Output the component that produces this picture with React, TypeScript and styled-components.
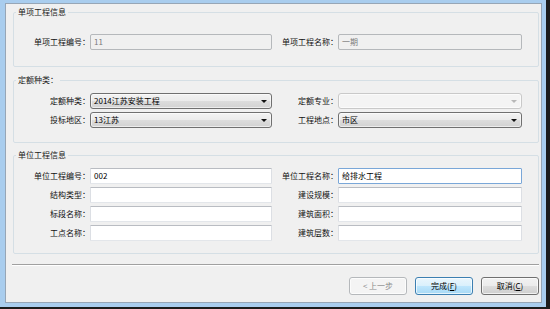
import React, { FC } from "react";
import styled, { createGlobalStyle } from "styled-components";

const GlobalStyle = createGlobalStyle`
  html, body {
    margin: 0;
    padding: 0;
    background: #1c1c1c;
  }
  body {
    font-family: "Noto Sans CJK SC", "Microsoft YaHei", sans-serif;
    font-size: 8px;
    color: #000;
  }
  * {
    box-sizing: border-box;
  }
`;

const Screen = styled.div`
  width: 550px;
  height: 309px;
  overflow: hidden;
  background: #1c1c1c;
  padding: 0 4px 2px 0;
`;

const Frame = styled.div`
  height: 100%;
  background: #a9cdee;
  padding: 3px 4px 4px 5px;
  display: flex;
  flex-direction: column;
`;

const Client = styled.div`
  flex: 1;
  background: #f0f0f0;
  border: 1px solid #97a6b6;
  padding: 3px 2px 0 7px;
  display: flex;
  flex-direction: column;
`;

const Group = styled.fieldset<{ $top: number; $pt: number; $pb: number }>`
  margin: ${(p) => p.$top}px 0 0 0;
  min-width: 0;
  border: 1px solid #d5dfe5;
  border-radius: 2px;
  padding: ${(p) => p.$pt}px 15px ${(p) => p.$pb}px 0;
`;

const Legend = styled.legend`
  margin-left: 2px;
  padding: 0 2px;
  font-size: 8px;
  line-height: 10px;
  color: #1a1a1a;
`;

const FormGrid = styled.div`
  display: grid;
  grid-template-columns: 76px 182px 66px 184px;
  grid-auto-rows: 16px;
  row-gap: 3px;
`;

const Label = styled.div`
  font-size: 8px;
  line-height: 16px;
  text-align: right;
  white-space: nowrap;
  color: #111;
`;

const TextBox = styled.div<{ $disabled?: boolean; $focused?: boolean }>`
  height: 16px;
  border: 1px solid;
  border-color: ${(p) =>
    p.$focused
      ? "#7aa7d8"
      : p.$disabled
      ? "#b5b8bb"
      : "#b9bcc2 #dcdfe4 #e3e6ea #dcdfe4"};
  border-radius: ${(p) => (p.$disabled ? "2px" : "1px")};
  background: ${(p) => (p.$disabled ? "#f0f0f0" : "#fff")};
  color: ${(p) => (p.$disabled ? "#7a7a7a" : "#000")};
  padding-left: 3px;
  font-size: 8px;
  line-height: 14px;
  white-space: nowrap;
  overflow: hidden;
`;

const Combo = styled.div<{ $disabled?: boolean }>`
  height: 16px;
  border: 1px solid ${(p) => (p.$disabled ? "#c9c9c9" : "#707070")};
  border-radius: 3px;
  background: ${(p) =>
    p.$disabled
      ? "#f4f4f4"
      : "linear-gradient(#f3f3f3 0%, #ebebeb 50%, #dddddd 50%, #d2d2d2 100%)"};
  box-shadow: inset 0 0 0 1px rgba(255, 255, 255, 0.6);
  padding: 0 4px 0 3px;
  display: flex;
  align-items: center;
  justify-content: space-between;
  font-size: 8px;
  line-height: 14px;
  color: #000;
  white-space: nowrap;
`;

const Arrow = styled.span<{ $disabled?: boolean }>`
  width: 0;
  height: 0;
  border-left: 3px solid transparent;
  border-right: 3px solid transparent;
  border-top: 3px solid ${(p) => (p.$disabled ? "#b8b8b8" : "#111")};
`;

const Separator = styled.div`
  margin: 10px 0 0 -1px;
  border-top: 1px solid #a0a0a0;
  border-bottom: 1px solid #ffffff;
`;

const ButtonRow = styled.div`
  margin-top: 11px;
  display: flex;
  justify-content: flex-end;
  gap: 8px;
  padding-right: 0;
`;

const Button = styled.div<{ $variant?: "default" | "disabled" }>`
  width: 58px;
  height: 18px;
  border-radius: 3px;
  border: 1px solid
    ${(p) =>
      p.$variant === "default"
        ? "#3c7fb1"
        : p.$variant === "disabled"
        ? "#b5b8bb"
        : "#707070"};
  background: ${(p) =>
    p.$variant === "default"
      ? "linear-gradient(#eaf6fd 0%, #d9f0fc 50%, #bee6fd 50%, #a7d9f5 100%)"
      : p.$variant === "disabled"
      ? "#f4f4f4"
      : "linear-gradient(#f2f2f2 0%, #ebebeb 50%, #dddddd 50%, #cfcfcf 100%)"};
  box-shadow: inset 0 0 0 1px rgba(255, 255, 255, 0.7);
  color: ${(p) => (p.$variant === "disabled" ? "#8a8a8a" : "#000")};
  font-size: 8px;
  line-height: 16px;
  text-align: center;
`;

type Field = { label: string; value?: string; disabled?: boolean; focused?: boolean };

const FieldPair: FC<{ field: Field }> = ({ field }) => (
  <>
    <Label>{field.label}</Label>
    <TextBox $disabled={field.disabled} $focused={field.focused}>
      {field.value}
    </TextBox>
  </>
);

const ComboPair: FC<{ label: string; value?: string; disabled?: boolean }> = ({
  label,
  value,
  disabled,
}) => (
  <>
    <Label>{label}</Label>
    <Combo $disabled={disabled}>
      <span>{value}</span>
      <Arrow $disabled={disabled} />
    </Combo>
  </>
);

const unitFields: Field[] = [
  { label: "单位工程编号：", value: "002" },
  { label: "单位工程名称：", value: "给排水工程", focused: true },
  { label: "结构类型：" },
  { label: "建设规模：" },
  { label: "标段名称：" },
  { label: "建筑面积：" },
  { label: "工点名称：" },
  { label: "建筑层数：" },
];

const App: FC = () => {
  return (
    <>
      <GlobalStyle />
      <Screen>
        <Frame>
          <Client>
            <Group $top={0} $pt={17} $pb={16}>
              <Legend>单项工程信息</Legend>
              <FormGrid>
                <FieldPair field={{ label: "单项工程编号：", value: "11", disabled: true }} />
                <FieldPair field={{ label: "单项工程名称：", value: "一期", disabled: true }} />
              </FormGrid>
            </Group>

            <Group $top={8} $pt={8} $pb={14}>
              <Legend>定额种类：</Legend>
              <FormGrid>
                <ComboPair label="定额种类：" value="2014江苏安装工程" />
                <ComboPair label="定额专业：" disabled />
                <ComboPair label="投标地区：" value="13江苏" />
                <ComboPair label="工程地点：" value="市区" />
              </FormGrid>
            </Group>

            <Group $top={7} $pt={8} $pb={12}>
              <Legend>单位工程信息</Legend>
              <FormGrid>
                {unitFields.map((f) => (
                  <FieldPair key={f.label} field={f} />
                ))}
              </FormGrid>
            </Group>

            <Separator />

            <ButtonRow>
              <Button $variant="disabled">&lt; 上一步</Button>
              <Button $variant="default">
                完成(<u>F</u>)
              </Button>
              <Button>
                取消(<u>C</u>)
              </Button>
            </ButtonRow>
          </Client>
        </Frame>
      </Screen>
    </>
  );
};

export default App;
